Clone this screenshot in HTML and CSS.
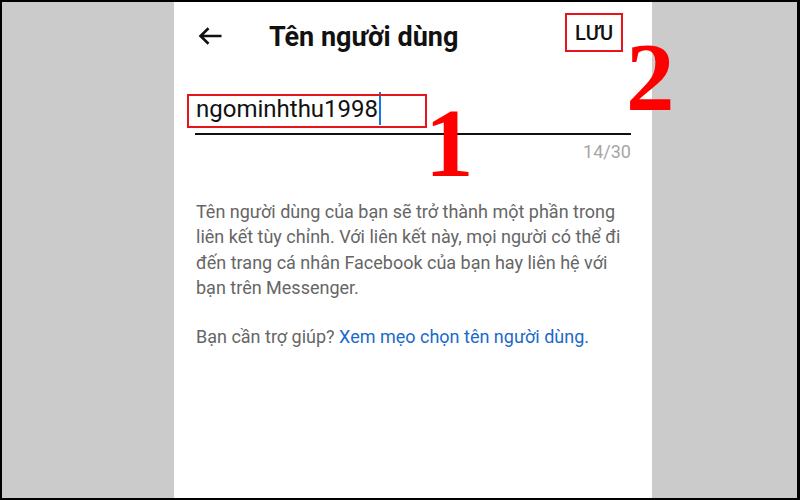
FILE: index.html
```html
<!DOCTYPE html>
<html lang="vi">
<head>
<meta charset="utf-8">
<title>Tên người dùng</title>
<link rel="stylesheet" href="styles.css">
</head>
<body>
<div class="frame">
  <div class="panel">
    <header class="topbar">
      <span class="back">
        <svg width="24" height="18" viewBox="0 0 24 18"><path d="M23.5 9H2.5M10.5 1.2L2.5 9l8 7.8" stroke="#111" stroke-width="2.6" fill="none" stroke-linejoin="miter"/></svg>
      </span>
      <h1 class="title">Tên người dùng</h1>
      <span class="save">LƯU</span>
    </header>
    <div class="field">
      <div class="input"><span class="value">ngominhthu1998</span><span class="caret"></span></div>
      <div class="counter">14/30</div>
    </div>
    <p class="desc">Tên người dùng của bạn sẽ trở thành một phần trong liên kết tùy chỉnh. Với liên kết này, mọi người có thể đi đến trang cá nhân Facebook của bạn hay liên hệ với bạn trên Messenger.</p>
    <p class="help">Bạn cần trợ giúp? <a class="link">Xem mẹo chọn tên người dùng.</a></p>
    <div class="mark mark-input"></div>
    <div class="num num1">1</div>
    <div class="num num2">2</div>
  </div>
</div>
</body>
</html>
```

FILE: styles.css
```css
* { box-sizing: border-box; }
html, body { margin: 0; padding: 0; }
body { width: 800px; height: 500px; overflow: hidden; font-family: Roboto, "Noto Sans", sans-serif; }

.frame {
  width: 800px;
  height: 500px;
  border: 2px solid #000;
  border-right-width: 3px;
  background: #cbcbcb;
  padding-left: 172px;
  display: flex;
}

.panel {
  position: relative;
  width: 478px;
  height: 100%;
  background: #fff;
  padding: 0 21px;
}

.topbar {
  height: 66px;
  display: flex;
  align-items: center;
}

.back {
  display: flex;
  margin-left: 3px;
  margin-top: 2px;
}

.title {
  margin: 3px 0 0 47px;
  font-size: 27px;
  font-weight: 700;
  line-height: 30px;
  color: #111;
}

.save {
  margin-left: auto;
  margin-right: 8px;
  align-self: flex-start;
  margin-top: 11px;
  height: 39px;
  padding: 0 8px;
  border: 2px solid #e8141b;
  display: flex;
  align-items: center;
  font-size: 20px;
  font-weight: 500;
  color: #111;
}

.field { margin-top: 24px; }

.input {
  display: flex;
  align-items: flex-start;
  height: 43px;
  border-bottom: 2px solid #111;
  padding-left: 1px;
}

.value {
  margin-top: 3px;
  font-size: 24px;
  line-height: 28px;
  color: #111;
}

.caret {
  width: 2px;
  height: 33px;
  margin-left: 1px;
  background: #1a73e8;
}

.counter {
  margin-top: 6px;
  text-align: right;
  font-size: 18px;
  line-height: 21px;
  color: #a6a6a6;
}

.desc {
  margin: 37px 0 0 1px;
  font-size: 18px;
  line-height: 25.3px;
  color: #666;
}

.help {
  margin: 24px 0 0 1px;
  font-size: 18px;
  line-height: 25.3px;
  color: #666;
}

.link { color: #1b6ac9; }

.mark {
  position: absolute;
  border: 2px solid #e8141b;
}

.mark-input {
  left: 13px;
  top: 92px;
  width: 240px;
  height: 34px;
}

.num {
  position: absolute;
  font-family: "Liberation Serif", "Times New Roman", serif;
  font-weight: 700;
  font-size: 97px;
  line-height: 97px;
  color: #ff0000;
}

.num1 { left: 251px; top: 93px; }
.num2 { left: 452px; top: 27px; }
```
